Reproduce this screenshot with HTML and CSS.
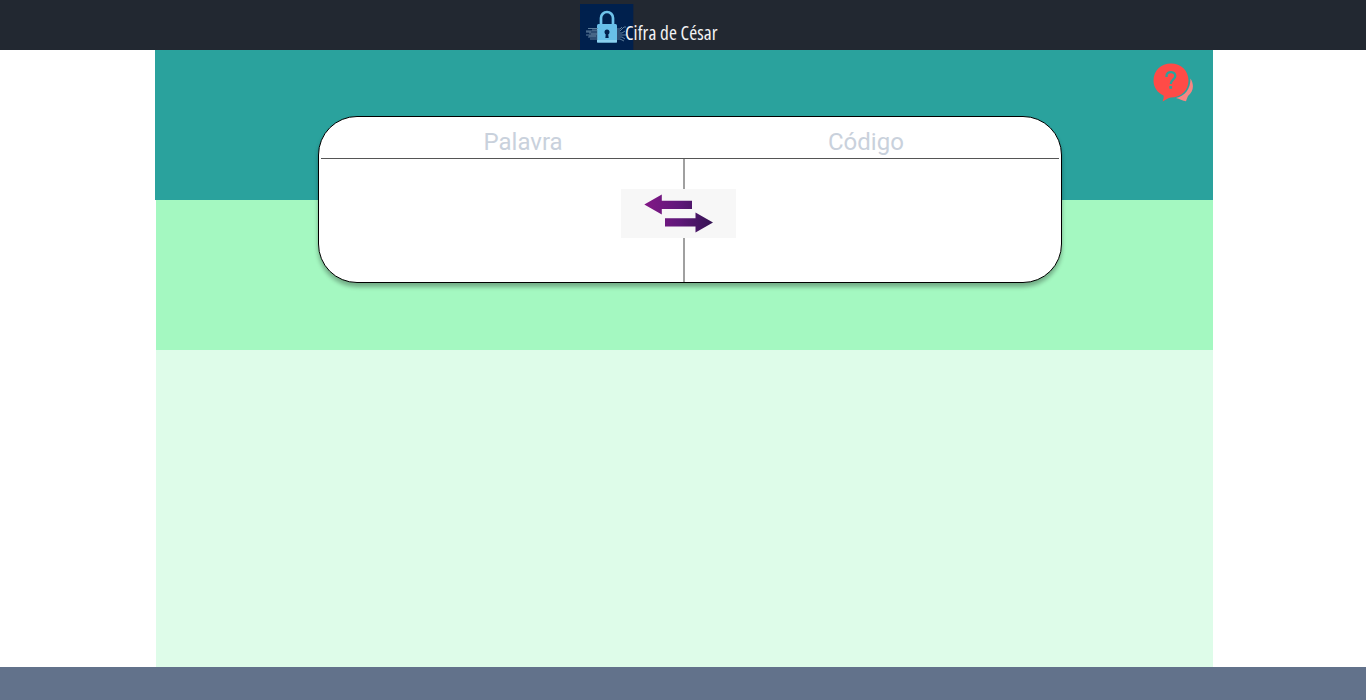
FILE: index.html
```html
<!DOCTYPE html>
<html lang="pt-BR">
<head>
<meta charset="utf-8">
<title>Cifra de César</title>
<link rel="stylesheet" href="styles.css">
</head>
<body>
<header class="topbar">
  <svg class="logo" width="54" height="46" viewBox="0 0 54 46" aria-hidden="true">
    <rect width="53.300" height="46" fill="#00204d"/>
    <path d="M21 23V14a6 6 0 0 1 12 0v9" fill="none" stroke="#6fc3ea" stroke-width="2.700"/>
    <rect x="17" y="20" width="20" height="18.500" rx="1.500" fill="#68bfe8"/>
    <path d="M17 36h20v2.500H17z" fill="#8bd0ef"/>
    <circle cx="27" cy="28" r="2.500" fill="#00204d"/>
    <path d="M26 28h2l.7 6h-3.400z" fill="#00204d"/>
    <g fill="none" stroke="#6687a2" stroke-width=".9">
      <path d="M8 24.500h10M6 27h12M9 29h9M6 31h12M8 33h10M10 35h8M12 26h5M11 30h6M6 28h5M9 32h7"/>
      <path d="M37 27h3l4-4h2M37 29h5l3-2M37 31h10M37 33h5l3 2M37 35h3l4 2M37 25h3l2-2"/>
    </g>
  </svg>
  <h1 class="title">Cifra de César</h1>
</header>
<main class="page">
  <section class="band band-top">
    <svg class="help" width="40" height="39" viewBox="0 0 40 39" aria-label="Ajuda">
      <path d="M37.500 15.500C41.500 22 40.500 28.500 35 33C34.200 35 33.500 36.500 33 38.300C29.500 37.800 26.500 36 23 35C32 33 37.500 26 37.500 15.500z" fill="#f98583"/>
      <path d="M18 .5C28 .5 35.500 7.500 35.500 17.500S28 34.500 18 34.500C15 34.500 13 37 9.500 38.500C10.500 36 11 34 10.500 32.500C4 29.500 .5 24 .5 17.500C.5 7.500 8 .5 18 .5z" fill="#ff4b47"/>
      <path d="M13.500 14v-1c0-5.300 8.800-5.300 8.800 0c0 3.500-4.500 3.500-4.500 8" fill="none" stroke="#2aa39d" stroke-width="2.300"/>
      <rect x="16.300" y="23" width="2.800" height="2.800" rx=".6" fill="#2aa39d"/>
    </svg>
  </section>
  <section class="band band-middle"></section>
  <section class="band band-bottom"></section>
  <form class="card">
    <div class="labels"><span class="label-word">Palavra</span><span class="label-code">Código</span></div>
    <div class="fields">
      <div class="field-word"></div>
      <div class="field-code"></div>
      <button class="swap" type="button" aria-label="Inverter">
        <svg class="arrows" width="115" height="49" viewBox="0 0 115 49">
          <defs>
            <linearGradient id="purple" gradientUnits="userSpaceOnUse" x1="23" y1="0" x2="92" y2="0">
              <stop offset="0" stop-color="#831786"/><stop offset=".5" stop-color="#60187a"/><stop offset="1" stop-color="#351453"/>
            </linearGradient>
          </defs>
          <path d="M23.300 15.500L40.800 5.500v6.200h30.200v8.300H40.800v5.500zM44 29.200h30.500v-5.700L92 33.500l-17.500 10v-6H44z" fill="url(#purple)"/>
        </svg>
      </button>
    </div>
  </form>
</main>
<footer class="footer"></footer>
</body>
</html>
```
FILE: styles.css
```css
* { box-sizing: border-box; }
body {
  margin: 0;
  height: 700px;
  display: flex;
  flex-direction: column;
  overflow: hidden;
  background: #fff;
  font-family: Roboto, sans-serif;
}
.topbar {
  height: 50px;
  flex: none;
  display: flex;
  padding: 4px 0 0 580px;
  background: #222831;
}
.logo { flex: none; }
.title {
  margin: 16px 0 0 -9px;
  font: 400 19.200px/25px "Open Sans", "Noto Sans", sans-serif;
  font-stretch: 75%;
  letter-spacing: .1px;
  color: #f3f3f4;
  white-space: nowrap;
}
.page {
  position: relative;
  flex: none;
  width: 1058px;
  height: 617px;
  margin-left: 155px;
}
.band { margin-left: 1px; }
.band-top {
  height: 150px;
  margin-left: 0;
  display: flex;
  justify-content: flex-end;
  padding: 13px 20px 0 0;
  background: #2aa29d;
}
.band-middle { height: 150px; background: #a4f8c1; }
.band-bottom { height: 317px; background: #defce9; }
.card {
  position: absolute;
  left: 163px;
  top: 66px;
  width: 744px;
  height: 167px;
  padding: 0 2px;
  border: 1px solid #000;
  border-radius: 39px;
  background: #fff;
  box-shadow: 0 4px 4px rgba(0, 0, 0, .3);
}
.labels {
  display: flex;
  height: 42px;
  padding-top: 11px;
  border-bottom: 1px solid #555;
  font-size: 24px;
  line-height: 28px;
  color: #c9d1dc;
}
.label-word { width: 344px; padding-left: 162.500px; }
.label-code { padding-left: 163px; }
.fields { position: relative; display: flex; height: 123px; }
.field-word { width: 364px; border-right: 2px solid #a0a0a0; }
.field-code { flex: 1; }
.swap {
  position: absolute;
  left: 300px;
  top: 30px;
  width: 115px;
  height: 49px;
  padding: 0;
  border: 0;
  background: #f7f7f7;
}
.arrows { display: block; }
.footer { flex: 1; background: #62728b; }
```
